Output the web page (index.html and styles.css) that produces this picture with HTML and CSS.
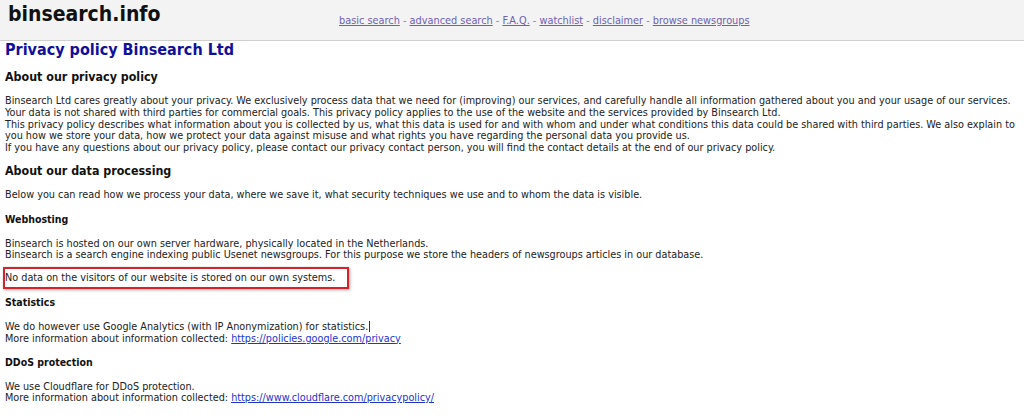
FILE: index.html
```html
<!DOCTYPE html>
<html lang="en">

	<head>
		<meta charset="UTF-8" />
		<meta name="viewport" content="width=device-width, initial-scale=1.0" />
		<title>binsearch.info - privacy policy</title>
		<link rel="stylesheet" href="styles.css">
	</head>

	<body>
		<div class="header">
			<div class="logo">binsearch.info</div>
			<div class="nav">
				<a href="#">basic search</a> - <a href="#">advanced search</a> - <a href="#">F.A.Q.</a> -
				<a href="#">watchlist</a> - <a href="#">disclaimer</a> - <a href="#">browse newsgroups</a>
			</div>
		</div>

		<div class="content">
			<h1>Privacy policy Binsearch Ltd</h1>

			<h2>About our privacy policy</h2>
			<p>Binsearch Ltd cares greatly about your privacy. We exclusively process data that we need for (improving) our services, and carefully handle all information gathered about you and your usage of our services.<br>
				Your data is not shared with third parties for commercial goals. This privacy policy applies to the use of the website and the services provided by Binsearch Ltd.<br>
				This privacy policy describes what information about you is collected by us, what this data is used for and with whom and under what conditions this data could be shared with third parties. We also explain to you how we store your data, how we protect your data against misuse and what rights you have regarding the personal data you provide us.<br>
				If you have any questions about our privacy policy, please contact our privacy contact person, you will find the contact details at the end of our privacy policy.</p>

			<h2 class="second">About our data processing</h2>
			<p>Below you can read how we process your data, where we save it, what security techniques we use and to whom the data is visible.</p>

			<h3>Webhosting</h3>
			<p class="after-h3">Binsearch is hosted on our own server hardware, physically located in the Netherlands.<br>
				Binsearch is a search engine indexing public Usenet newsgroups. For this purpose we store the headers of newsgroups articles in our database.</p>

			<p class="marked"><span>No data on the visitors of our website is stored on our own systems.</span></p>

			<h3 class="tight">Statistics</h3>
			<p class="after-h3">We do however use Google Analytics (with IP Anonymization) for statistics.<span class="caret"></span><br>
				More information about information collected: <a href="#">https://policies.google.com/privacy</a></p>

			<h3 class="last">DDoS protection</h3>
			<p class="after-h3">We use Cloudflare for DDoS protection.<br>
				More information about information collected: <a href="#">https://www.cloudflare.com/privacypolicy/</a></p>
		</div>
	</body>

</html>
```

FILE: styles.css
```css
body {
	margin: 0;
	background: #fff;
	color: #222;
	font-family: "DejaVu Sans Condensed", "DejaVu Sans", sans-serif;
	font-stretch: condensed;
	font-size: 10.78px;
}

.header {
	display: grid;
	grid-template-columns: 339px 1fr;
	height: 40px;
	background: #f3f3f3;
	border-bottom: 1px solid #d0d0d0;
}

.logo {
	padding: 2px 0 0 8px;
	font-size: 21px;
	font-weight: bold;
	color: #111;
}

.nav {
	padding-top: 14px;
	font-size: 10.85px;
	color: #888;
}

.nav a {
	color: #6e5fb0;
}

.content {
	padding: 0 5px;
}

h1 {
	margin: 0;
	font-size: 16px;
	line-height: 18px;
	color: #10109a;
}

h2 {
	margin: 10px 0 0;
	font-size: 12.35px;
	line-height: 16px;
	color: #111;
}

h2.second {
	margin-top: 9px;
}

h3 {
	margin: 11px 0 0;
	font-size: 10.5px;
	line-height: 14px;
	color: #111;
}

h3.tight {
	margin-top: 6px;
}

h3.last {
	margin-top: 10px;
}

p {
	margin: 10px 0 0;
	line-height: 11.75px;
}

p.after-h3 {
	margin-top: 12px;
}

a {
	color: #2233cc;
}

.marked {
	margin: 6px 0 0 -2px;
}

.marked span {
	display: inline-block;
	height: 18px;
	line-height: 18px;
	padding-right: 12px;
	border: 2px solid #d8222a;
	box-shadow: 1px 1px 3px rgba(0, 0, 0, 0.35);
}

/* text cursor left after "statistics." */
.caret {
	display: inline-block;
	width: 1px;
	height: 11px;
	margin-left: 1px;
	vertical-align: -2px;
	background: #333;
}
```
